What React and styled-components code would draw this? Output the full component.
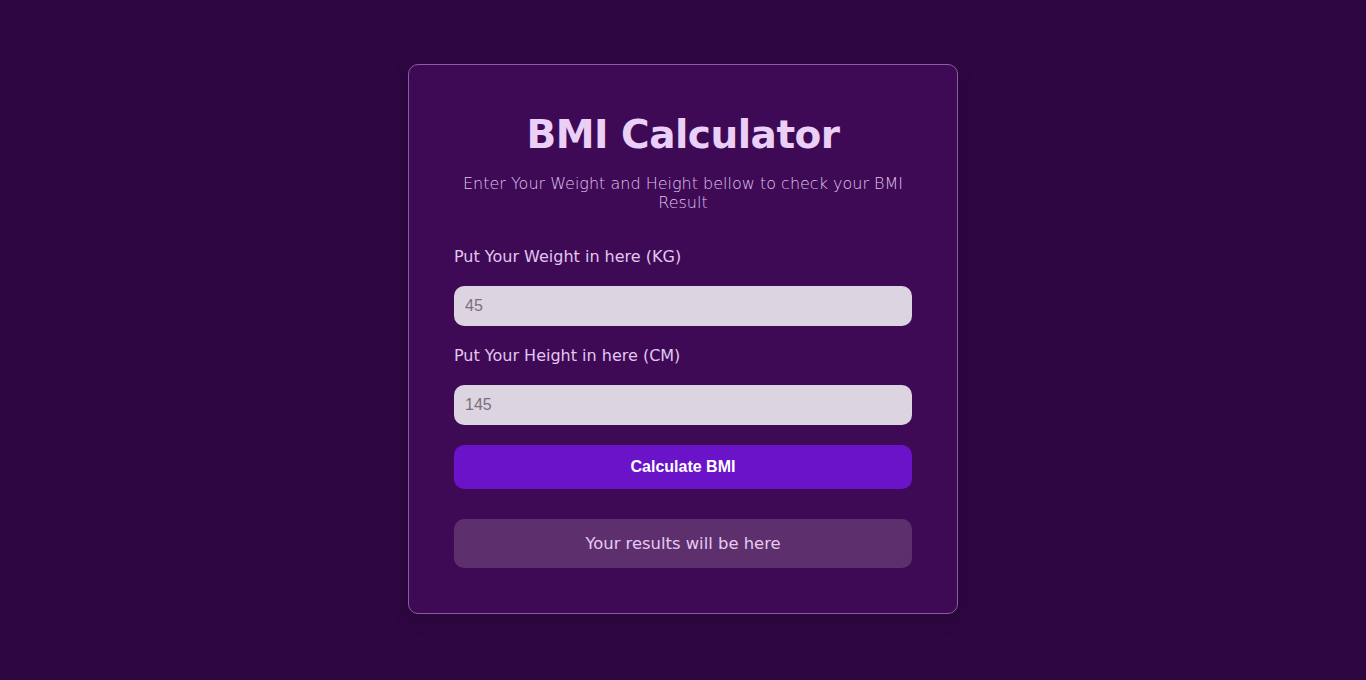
import React from "react";
import styled, { createGlobalStyle } from "styled-components";

const Global = createGlobalStyle`
  html, body { margin: 0; padding: 0; background: #2e0741; }
  body { font-family: "DejaVu Sans", "Open Sans", sans-serif; }
  * { box-sizing: border-box; }
`;

const Page = styled.div`
  min-height: 680px;
  display: flex;
  justify-content: center;
  align-items: flex-start;
  padding-top: 64px;
  background: #2e0741;
`;

const Card = styled.div`
  width: 550px;
  height: 550px;
  background: #3f0a55;
  border: 1px solid #8a5d9c;
  border-radius: 10px;
  padding: 45px 45px;
  display: flex;
  flex-direction: column;
  box-shadow: 0 6px 18px rgba(0, 0, 0, 0.15);
`;

const Title = styled.h1`
  margin: 0;
  text-align: center;
  font-family: "DejaVu Sans", sans-serif;
  font-weight: 700;
  font-size: 39px;
  line-height: 50px;
  color: #ead0f7;
  letter-spacing: -0.5px;
`;

const Subtitle = styled.p`
  margin: 14px 4px 0;
  text-align: center;
  font-family: "DejaVu Sans", sans-serif;
  font-weight: 200;
  font-size: 16px;
  line-height: 19px;
  color: #dfc2ec;
`;

const Label = styled.label`
  display: block;
  margin: ${(p) => p.$top}px 0 0;
  font-family: "DejaVu Sans", sans-serif;
  font-weight: 400;
  font-size: 16px;
  line-height: 19px;
  color: #e2c6f0;
`;

const Input = styled.input`
  display: block;
  width: 100%;
  height: 40px;
  margin-top: 20px;
  border: none;
  border-radius: 10px;
  background: #dcd4e1;
  padding: 0 11px;
  font-family: "Liberation Sans", Arial, sans-serif;
  font-size: 16px;
  color: #333;
  outline: none;
  &::placeholder { color: #77707b; }
`;

const Button = styled.button`
  display: block;
  width: 100%;
  height: 44px;
  margin-top: 20px;
  border: none;
  border-radius: 10px;
  background: #6a13c9;
  color: #ffffff;
  font-family: "Liberation Sans", Arial, sans-serif;
  font-weight: 700;
  font-size: 16px;
  cursor: pointer;
`;

const Result = styled.div`
  margin-top: 30px;
  height: 49px;
  border-radius: 10px;
  background: #5d306d;
  display: flex;
  align-items: center;
  justify-content: center;
  font-family: "DejaVu Sans", sans-serif;
  font-weight: 400;
  font-size: 16.4px;
  color: #e6caf1;
`;

export default function App() {
  return (
    <>
      <Global />
      <Page>
        <Card>
          <Title>BMI Calculator</Title>
          <Subtitle>Enter Your Weight and Height bellow to check your BMI Result</Subtitle>
          <Label $top={35}>Put Your Weight in here (KG)</Label>
          <Input type="number" placeholder="45" />
          <Label $top={20}>Put Your Height in here (CM)</Label>
          <Input type="number" placeholder="145" />
          <Button>Calculate BMI</Button>
          <Result>Your results will be here</Result>
        </Card>
      </Page>
    </>
  );
}
